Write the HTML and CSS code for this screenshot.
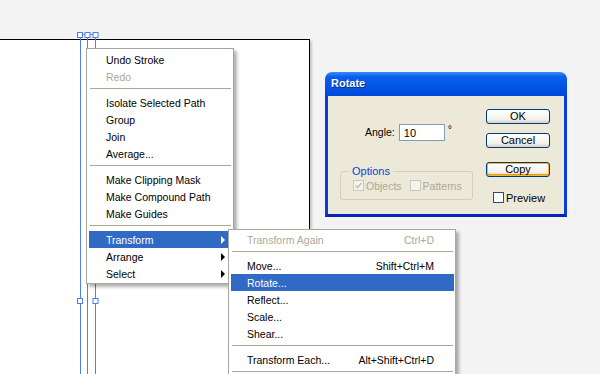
FILE: index.html
```html
<!DOCTYPE html>
<html lang="en">
<head>
    <meta charset="UTF-8">
    <meta name="viewport" content="width=device-width, initial-scale=1.0">
    <title>Rotate</title>
    <link rel="stylesheet" href="styles.css">
</head>
<body>
    <div class="stage">
        <div class="artboard"></div>

        <!-- selection bounding box of the path -->
        <svg class="guides" width="600" height="374" viewBox="0 0 600 374">
            <g stroke="#4f7df2" stroke-width="1" fill="none">
                <line x1="80.5" y1="37" x2="80.5" y2="374" />
                <line x1="87.5" y1="37" x2="87.5" y2="374" />
                <line x1="95.5" y1="37" x2="95.5" y2="374" />
                <line x1="80" y1="34.5" x2="96" y2="34.5" />
            </g>
            <g stroke="#4f7df2" stroke-width="1" fill="#fff">
                <rect x="77.5" y="32.5" width="5" height="5" />
                <rect x="85" y="32.5" width="5" height="5" />
                <rect x="93" y="32.5" width="5" height="5" />
                <rect x="77.5" y="298.5" width="5" height="5" />
                <rect x="93" y="298.5" width="5" height="5" />
            </g>
        </svg>

        <div class="menu menu-main">
            <div class="item">Undo Stroke</div>
            <div class="item disabled">Redo</div>
            <div class="sep"></div>
            <div class="item">Isolate Selected Path</div>
            <div class="item">Group</div>
            <div class="item">Join</div>
            <div class="item">Average...</div>
            <div class="sep"></div>
            <div class="item">Make Clipping Mask</div>
            <div class="item">Make Compound Path</div>
            <div class="item">Make Guides</div>
            <div class="sep"></div>
            <div class="item active">Transform<span class="arrow"></span></div>
            <div class="item">Arrange<span class="arrow"></span></div>
            <div class="item">Select<span class="arrow"></span></div>
        </div>

        <div class="menu menu-sub">
            <div class="item disabled">Transform Again<span class="key">Ctrl+D</span></div>
            <div class="sep"></div>
            <div class="item">Move...<span class="key">Shift+Ctrl+M</span></div>
            <div class="item active">Rotate...</div>
            <div class="item">Reflect...</div>
            <div class="item">Scale...</div>
            <div class="item">Shear...</div>
            <div class="sep"></div>
            <div class="item">Transform Each...<span class="key">Alt+Shift+Ctrl+D</span></div>
            <div class="sep"></div>
        </div>

        <div class="dialog">
            <div class="titlebar">Rotate</div>
            <div class="dialog-body">
                <div class="col-left">
                    <div class="angle-row">
                        <label for="angle">Angle:</label>
                        <input type="text" id="angle" class="field" value="10">
                        <span class="deg">°</span>
                    </div>
                    <fieldset class="options">
                        <legend>Options</legend>
                        <div class="check-row">
                            <span class="check disabled checked"><span class="box"><svg width="9" height="9" viewBox="0 0 9 9"><path d="M1.5 4.5 L3.5 6.5 L7.5 2" stroke="#c5c2b2" stroke-width="1.6" fill="none" /></svg></span>Objects</span>
                            <span class="check disabled"><span class="box"></span>Patterns</span>
                        </div>
                    </fieldset>
                </div>
                <div class="col-right">
                    <button class="btn">OK</button>
                    <button class="btn">Cancel</button>
                    <button class="btn btn-default">Copy</button>
                    <span class="check preview"><span class="box"></span>Preview</span>
                </div>
            </div>
        </div>
    </div>
</body>
</html>
```

FILE: styles.css
```css
body {
    margin: 0;
    padding: 0;
    background-color: #f3f3f3;
    font-family: "Liberation Sans", Arial, sans-serif;
    font-size: 10.5px;
    color: #000;
}
.stage {
    position: relative;
    width: 600px;
    height: 374px;
    overflow: hidden;
}
.artboard {
    position: absolute;
    left: -2px;
    top: 39px;
    width: 310px;
    height: 340px;
    background-color: #fff;
    border: 1px solid #000;
    box-shadow: 2px 2px 2px rgba(0, 0, 0, 0.18);
}
.guides {
    position: absolute;
    left: 0;
    top: 0;
}

/* context menus */
.menu {
    position: absolute;
    background-color: #fff;
    border: 1px solid #a7a69c;
    box-shadow: 3px 3px 3px rgba(0, 0, 0, 0.3);
}
.menu-main {
    left: 86px;
    top: 48px;
    width: 143px;
    padding: 2px 1px 1px 2px;
}
.menu-sub {
    left: 228px;
    top: 229px;
    width: 223px;
    padding: 1px 1px 0 2px;
}
.item {
    position: relative;
    display: flex;
    align-items: center;
    height: 17px;
    padding-left: 17px;
    white-space: nowrap;
}
.menu-sub .item {
    padding-left: 16px;
    padding-right: 20px;
}
.item.disabled {
    color: #aca899;
}
.item.active {
    background-color: #316ac5;
    color: #fff;
}
.key {
    margin-left: auto;
}
.arrow {
    position: absolute;
    right: 7px;
    top: 5px;
    width: 0;
    height: 0;
    border-left: 4px solid #000;
    border-top: 4px solid transparent;
    border-bottom: 4px solid transparent;
}
.item.active .arrow {
    border-left-color: #fff;
}
.sep {
    height: 1px;
    margin: 3px 1px 5px 1px;
    background-color: #aca899;
}

/* dialog window */
.dialog {
    position: absolute;
    left: 325px;
    top: 72px;
    width: 242px;
    display: flex;
    flex-direction: column;
}
.titlebar {
    height: 24px;
    padding-left: 6px;
    line-height: 23px;
    color: #fff;
    font-weight: bold;
    font-size: 11px;
    border-radius: 7px 7px 0 0;
    background: linear-gradient(#3a8cf8 0%, #0a5ef0 20%, #0055e5 60%, #0048d8 100%);
    text-shadow: 1px 1px 0 #0a2a90;
}
.dialog-body {
    display: flex;
    height: 118px;
    background-color: #ece9d8;
    border: 3px solid #0a3cd6;
    border-top: none;
    border-bottom-color: #0722b4;
}
.col-left {
    width: 158px;
}
.angle-row {
    display: flex;
    align-items: flex-start;
    margin-top: 28px;
    padding-left: 37px;
}
.angle-row label {
    line-height: 17px;
}
.field {
    box-sizing: border-box;
    width: 46px;
    height: 17px;
    margin-left: 4px;
    padding: 0 0 0 4px;
    border: 1px solid #7f9db9;
    background-color: #fff;
    font-family: inherit;
    font-size: 11px;
}
.deg {
    margin-left: 3px;
    line-height: 11px;
}
.options {
    box-sizing: border-box;
    width: 133px;
    margin: 24px 0 0 12px;
    padding: 1px 8px 7px 8px;
    border: 1px solid #d0d0bf;
    border-radius: 3px;
}
.options legend {
    padding: 0 3px;
    color: #0046d5;
    font-size: 11px;
    line-height: 13px;
}
.check-row {
    display: flex;
    gap: 8px;
    padding-left: 4px;
}
.check {
    display: flex;
    align-items: center;
    gap: 2px;
    height: 13px;
}
.check .box {
    box-sizing: border-box;
    display: flex;
    align-items: center;
    justify-content: center;
    width: 11px;
    height: 11px;
    background-color: #fff;
    border: 1px solid #1c5180;
}
.check.disabled {
    color: #aca899;
}
.check.disabled .box {
    background-color: #f4f3ee;
    border-color: #cac8bb;
}
.col-right {
    display: flex;
    flex-direction: column;
    width: 64px;
    padding-top: 13px;
}
.btn {
    box-sizing: border-box;
    width: 64px;
    height: 15px;
    padding: 0;
    border: 1px solid #003c74;
    border-radius: 3px;
    background: linear-gradient(#ffffff, #f3f2ec 70%, #d6d0c5);
    font-family: inherit;
    font-size: 11px;
    line-height: 13px;
    color: #000;
}
.btn + .btn {
    margin-top: 9px;
}
.btn-default {
    margin-top: 14px !important;
    box-shadow: inset 0 0 0 1px #f8b330, inset 0 -1px 0 1px #e5a01a;
}
.preview {
    margin-top: 14px;
    margin-left: 7px;
    font-size: 11px;
}
```
